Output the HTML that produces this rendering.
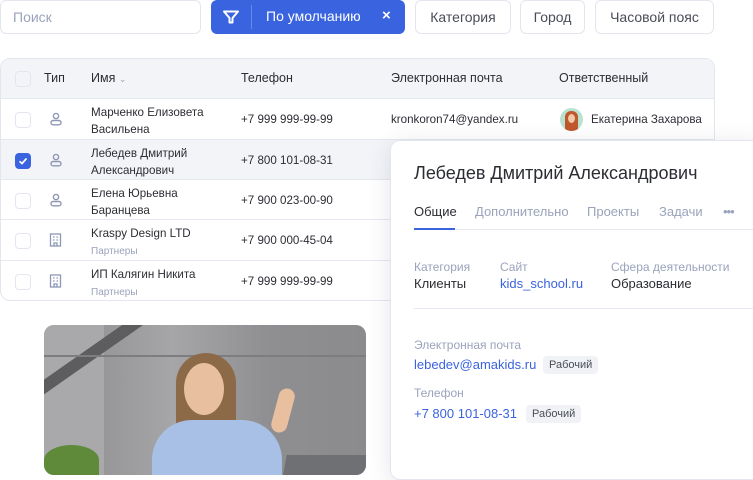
<!DOCTYPE html>
<html><head><meta charset="utf-8"><style>
*{box-sizing:border-box;margin:0;padding:0}
body{width:753px;height:470px;overflow:hidden;background:#fff;font-family:"Liberation Sans","Noto Sans CJK SC",sans-serif;color:#2b2d33;position:relative}
.abs{position:absolute}
.btn{position:absolute;top:0;height:34px;border:1px solid #e3e6ee;border-radius:6px;font-size:14px;color:#4a4d57;display:flex;align-items:center;justify-content:center}
.tbl{position:absolute;left:0;top:58px;width:715px;height:243px;border:1px solid #e3e6ee;border-radius:10px;overflow:hidden}
.row{position:absolute;left:0;width:715px;border-top:1px solid #e6e8ef;font-size:11.6px}
.cb{position:absolute;left:14px;width:16px;height:16px;border:1px solid #e3e6ee;border-radius:4px;background:#fff}
.c{position:absolute;line-height:17px}
.sub{font-size:10px;color:#9aa3bb}
.card{position:absolute;left:390px;top:140px;width:375px;height:340px;background:#fff;border:1px solid #e3e6ee;border-radius:10px;box-shadow:0 4px 24px rgba(40,50,80,.12)}
.lbl{position:absolute;font-size:12px;color:#9aa3bb}
.val{position:absolute;font-size:13px;color:#2b2d33}
.lnk{color:#3a63e0}
.tag{position:absolute;font-size:11px;color:#4a4d57;background:#f1f2f6;border-radius:4px;padding:3px 6px}
</style></head><body>
<div class="btn" style="left:0;width:201px;justify-content:flex-start;padding-left:12px;color:#9aa3bb">Поиск</div>
<div class="abs" style="left:211px;top:0;width:194px;height:34px;background:#3a63e0;border-radius:6px;color:#fff;font-size:14px">
 <svg class="abs" style="left:12px;top:10px" width="16" height="14" viewBox="0 0 16 14"><path d="M1 1.5h14L9.5 8v4.5h-3V8z" fill="none" stroke="#fff" stroke-width="2" stroke-linejoin="round"/></svg>
 <div class="abs" style="left:40px;top:5px;width:1px;height:24px;background:#6b8ae8"></div>
 <div class="abs" style="left:55px;top:8px">По умолчанию</div>
 <div class="abs" style="left:171px;top:7px;font-size:15px;font-weight:bold">×</div>
</div>
<div class="btn" style="left:415px;width:96px">Категория</div>
<div class="btn" style="left:520px;width:65px">Город</div>
<div class="btn" style="left:595px;width:119px">Часовой пояс</div>

<div class="tbl">
 <div class="row" style="top:0;height:40px;background:#f3f4f8;border-top:none;font-size:12.5px">
  <div class="cb" style="top:12px;background:#f3f4f8"></div>
  <div class="c" style="left:43px;top:11px">Тип</div>
  <div class="c" style="left:90px;top:11px">Имя <span style="color:#9aa3bb;font-size:9px">&#8964;</span></div>
  <div class="c" style="left:240px;top:11px">Телефон</div>
  <div class="c" style="left:390px;top:11px">Электронная почта</div>
  <div class="c" style="left:558px;top:11px">Ответственный</div>
 </div>
 <div class="row" style="top:39px;height:41px">
  <div class="cb" style="top:13px"></div>
  <svg class="abs" style="left:49px;top:13px" width="12" height="14" viewBox="0 0 12 14"><circle cx="6" cy="4" r="2.6" fill="none" stroke="#8d97b5" stroke-width="1.4"/><rect x="1" y="8.5" width="10" height="4.3" rx="2.1" fill="none" stroke="#8d97b5" stroke-width="1.4"/></svg>
  <div class="c" style="left:90px;top:5px">Марченко Елизовета<br>Васильена</div>
  <div class="c" style="left:240px;top:12px">+7 999 999-99-99</div>
  <div class="c" style="left:390px;top:12px">kronkoron74@yandex.ru</div>
  <div class="abs" style="left:559px;top:9px;width:23px;height:23px;border-radius:50%;background:#b9e3cf;overflow:hidden"><div class="abs" style="left:5px;top:3px;width:13px;height:20px;border-radius:6px 6px 3px 3px;background:#c0582e"></div><div class="abs" style="left:8px;top:6px;width:7px;height:9px;border-radius:50%;background:#f0c8a8"></div></div>
  <div class="c" style="left:590px;top:12px">Екатерина Захарова</div>
 </div>
 <div class="row" style="top:80px;height:41px;background:#f3f4f8">
  <div class="cb" style="top:13px;background:#3a63e0;border-color:#3a63e0"><svg width="14" height="14" viewBox="0 0 14 14"><path d="M3.5 7.2l2.5 2.3 4.5-5" fill="none" stroke="#fff" stroke-width="1.7"/></svg></div>
  <svg class="abs" style="left:49px;top:13px" width="12" height="14" viewBox="0 0 12 14"><circle cx="6" cy="4" r="2.6" fill="none" stroke="#8d97b5" stroke-width="1.4"/><rect x="1" y="8.5" width="10" height="4.3" rx="2.1" fill="none" stroke="#8d97b5" stroke-width="1.4"/></svg>
  <div class="c" style="left:90px;top:5px">Лебедев Дмитрий<br>Александрович</div>
  <div class="c" style="left:240px;top:12px">+7 800 101-08-31</div>
 </div>
 <div class="row" style="top:120px;height:41px">
  <div class="cb" style="top:13px"></div>
  <svg class="abs" style="left:49px;top:13px" width="12" height="14" viewBox="0 0 12 14"><circle cx="6" cy="4" r="2.6" fill="none" stroke="#8d97b5" stroke-width="1.4"/><rect x="1" y="8.5" width="10" height="4.3" rx="2.1" fill="none" stroke="#8d97b5" stroke-width="1.4"/></svg>
  <div class="c" style="left:90px;top:5px">Елена Юрьевна<br>Баранцева</div>
  <div class="c" style="left:240px;top:12px">+7 900 023-00-90</div>
 </div>
 <div class="row" style="top:160px;height:41px">
  <div class="cb" style="top:13px"></div>
  <svg class="abs" style="left:48px;top:13px" width="13" height="14" viewBox="0 0 13 14"><rect x="1.5" y="1" width="10" height="12" fill="none" stroke="#8d97b5" stroke-width="1.3"/><path d="M4 4h1.5M7.5 4H9M4 7h1.5M7.5 7H9M5 13v-3h3v3" stroke="#8d97b5" stroke-width="1.3" fill="none"/></svg>
  <div class="c" style="left:90px;top:5px">Kraspy Design LTD<br><span class="sub">Партнеры</span></div>
  <div class="c" style="left:240px;top:12px">+7 900 000-45-04</div>
 </div>
 <div class="row" style="top:201px;height:41px">
  <div class="cb" style="top:13px"></div>
  <svg class="abs" style="left:48px;top:13px" width="13" height="14" viewBox="0 0 13 14"><rect x="1.5" y="1" width="10" height="12" fill="none" stroke="#8d97b5" stroke-width="1.3"/><path d="M4 4h1.5M7.5 4H9M4 7h1.5M7.5 7H9M5 13v-3h3v3" stroke="#8d97b5" stroke-width="1.3" fill="none"/></svg>
  <div class="c" style="left:90px;top:5px">ИП Калягин Никита<br><span class="sub">Партнеры</span></div>
  <div class="c" style="left:240px;top:12px">+7 999 999-99-99</div>
 </div>
</div>

<div class="abs" style="left:44px;top:325px;width:322px;height:150px;border-radius:10px;overflow:hidden;background:linear-gradient(90deg,#8a8a8e,#a6a6a8 40%,#8f8f92 70%,#8b8b8d)">
 <div class="abs" style="left:0;top:0;width:60px;height:150px;background:#a9a9ab"></div>
 <div class="abs" style="left:-20px;top:70px;width:240px;height:12px;background:#5d5d60;transform:rotate(-35deg);transform-origin:left"></div>
 <div class="abs" style="left:0;top:30px;width:322px;height:2px;background:#7d7d80"></div>
 <div class="abs" style="left:240px;top:130px;width:90px;height:30px;background:#6e7073;transform:skewX(-10deg)"></div>
 <div class="abs" style="left:0;top:120px;width:55px;height:30px;border-radius:50% 50% 0 0;background:#5e8a3a"></div>
 <div class="abs" style="left:132px;top:28px;width:60px;height:85px;border-radius:30px 30px 10px 10px;background:#8c6a48"></div>
 <div class="abs" style="left:140px;top:38px;width:40px;height:52px;border-radius:50%;background:#e8c0a0"></div>
 <div class="abs" style="left:108px;top:95px;width:130px;height:70px;border-radius:40px 40px 0 0;background:#a9c0e6"></div>
 <div class="abs" style="left:231px;top:63px;width:16px;height:45px;border-radius:8px;background:#e8c0a0;transform:rotate(15deg)"></div>
</div>

<div class="card">
 <div class="abs" style="left:23px;top:22px;font-size:18px;color:#2b2d33">Лебедев Дмитрий Александрович</div>
 <div class="abs" style="left:23px;top:63px;font-size:13px;color:#2b2d33">Общие</div>
 <div class="abs" style="left:84px;top:63px;font-size:13px;color:#9aa3bb">Дополнительно</div>
 <div class="abs" style="left:196px;top:63px;font-size:13px;color:#9aa3bb">Проекты</div>
 <div class="abs" style="left:268px;top:63px;font-size:13px;color:#9aa3bb">Задачи</div>
 <div class="abs" style="left:332px;top:63px;font-size:13px;color:#9aa3bb;letter-spacing:-1px">•••</div>
 <div class="abs" style="left:23px;top:88px;width:352px;height:1px;background:#e6e8ef"></div>
 <div class="abs" style="left:23px;top:87px;width:41px;height:2px;background:#3a63e0"></div>
 <div class="lbl" style="left:23px;top:119px">Категория</div>
 <div class="val" style="left:23px;top:135px">Клиенты</div>
 <div class="lbl" style="left:109px;top:119px">Сайт</div>
 <div class="val lnk" style="left:109px;top:135px">kids_school.ru</div>
 <div class="lbl" style="left:220px;top:119px">Сфера деятельности</div>
 <div class="val" style="left:220px;top:135px">Образование</div>
 <div class="abs" style="left:23px;top:167px;width:352px;height:1px;background:#e6e8ef"></div>
 <div class="lbl" style="left:23px;top:197px">Электронная почта</div>
 <div class="val lnk" style="left:23px;top:216px">lebedev@amakids.ru</div>
 <div class="tag" style="left:152px;top:215px">Рабочий</div>
 <div class="lbl" style="left:23px;top:245px">Телефон</div>
 <div class="val lnk" style="left:23px;top:265px">+7 800 101-08-31</div>
 <div class="tag" style="left:135px;top:264px">Рабочий</div>
</div>
</body></html>
